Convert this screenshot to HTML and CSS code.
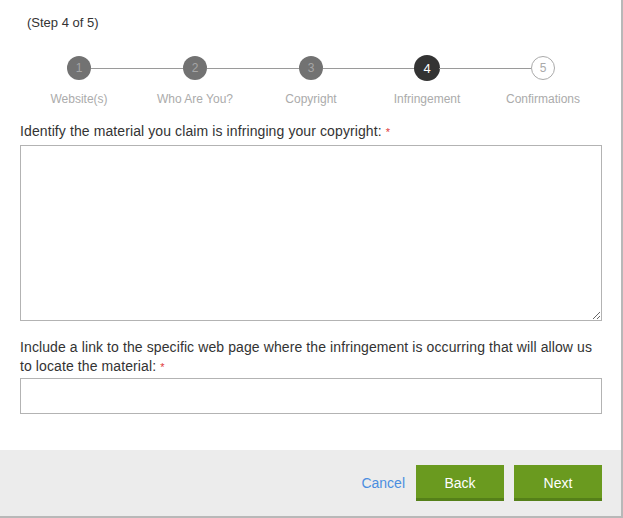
FILE: index.html
```html
<!DOCTYPE html>
<html>
<head>
<meta charset="utf-8">
<link rel="stylesheet" href="styles.css">
</head>
<body>
<div class="panel">
  <div class="content">
    <div class="step-title">(Step 4 of 5)</div>
    <div class="steps">
      <span class="circle done">1</span>
      <span class="line"></span>
      <span class="circle done">2</span>
      <span class="line"></span>
      <span class="circle done">3</span>
      <span class="line"></span>
      <span class="circle current">4</span>
      <span class="line"></span>
      <span class="circle todo">5</span>
    </div>
    <div class="step-labels">
      <span>Website(s)</span>
      <span>Who Are You?</span>
      <span>Copyright</span>
      <span>Infringement</span>
      <span>Confirmations</span>
    </div>
    <label class="field-label first">Identify the material you claim is infringing your copyright: <span class="req">*</span></label>
    <textarea class="textarea"></textarea>
    <label class="field-label second">Include a link to the specific web page where the infringement is occurring that will allow us to locate the material: <span class="req">*</span></label>
    <input class="input" type="text">
  </div>
  <div class="footer">
    <a class="cancel">Cancel</a>
    <button class="btn">Back</button>
    <button class="btn">Next</button>
  </div>
</div>
</body>
</html>
```
FILE: styles.css
```css
html, body {
  margin: 0;
  padding: 0;
  background: #fff;
}
body {
  font-family: "Liberation Sans", Arial, Helvetica, sans-serif;
  color: #333;
}
.panel {
  width: 621px;
  height: 516px;
  border-right: 2px solid #b8b8b8;
  border-bottom: 2px solid #b8b8b8;
  display: flex;
  flex-direction: column;
  background: #fff;
}
.content {
  flex: 1;
  padding: 13px 19px 0 20px;
  display: flex;
  flex-direction: column;
}
.step-title {
  font-size: 13px;
  line-height: 20px;
  padding-left: 7px;
  color: #333;
}
.steps {
  display: flex;
  align-items: center;
  height: 26px;
  margin: 22px 0 0 1px;
  width: 580px;
  padding: 0 46px;
  box-sizing: border-box;
}
.circle {
  width: 24px;
  height: 24px;
  border-radius: 50%;
  display: flex;
  align-items: center;
  justify-content: center;
  font-size: 12px;
  box-sizing: border-box;
  flex: none;
}
.circle.done {
  background: #727272;
  color: #a6a6a6;
}
.circle.current {
  width: 26px;
  height: 26px;
  margin: 0 -1px;
  background: #333;
  color: #fff;
  font-size: 13px;
}
.circle.todo {
  background: #fff;
  border: 1px solid #aaa;
  color: #aaa;
}
.line {
  flex: 1;
  height: 1px;
  background: #9a9a9a;
}
.step-labels {
  display: grid;
  grid-template-columns: repeat(5, 116px);
  margin: 10px 0 0 1px;
  font-size: 12px;
  line-height: 16px;
  color: #ababab;
  text-align: center;
}
.field-label {
  display: block;
  font-size: 14px;
  line-height: 19px;
  letter-spacing: 0.1px;
  color: #333;
}
.field-label.first {
  margin-top: 15px;
}
.field-label.second {
  margin-top: 17px;
}
.req {
  color: #e0393b;
  font-size: 11px;
  line-height: 10px;
}
.textarea {
  display: block;
  width: 582px;
  height: 176px;
  margin: 4px 0 0 0;
  box-sizing: border-box;
  border: 1px solid #b3b3b3;
  border-radius: 0;
  padding: 6px;
  font-family: inherit;
  font-size: 13px;
  resize: both;
  outline: none;
}
.input {
  display: block;
  width: 582px;
  height: 36px;
  margin: 2px 0 0 0;
  box-sizing: border-box;
  border: 1px solid #b3b3b3;
  border-radius: 0;
  padding: 0 8px;
  font-family: inherit;
  font-size: 13px;
  outline: none;
}
.footer {
  height: 66px;
  background: #ececec;
  display: flex;
  align-items: flex-start;
  justify-content: flex-end;
  padding: 15px 19px 0 0;
  box-sizing: border-box;
  gap: 10px;
}
.cancel {
  font-size: 14px;
  line-height: 36px;
  color: #4a8ee0;
  cursor: pointer;
  margin-right: 1px;
}
.btn {
  width: 88px;
  height: 36px;
  background: #6a9a1f;
  border: none;
  border-bottom: 3px solid #558019;
  color: #fff;
  font-family: inherit;
  font-size: 14px;
  padding: 2px 0 0 0;
  box-sizing: border-box;
  border-radius: 0;
}
```
